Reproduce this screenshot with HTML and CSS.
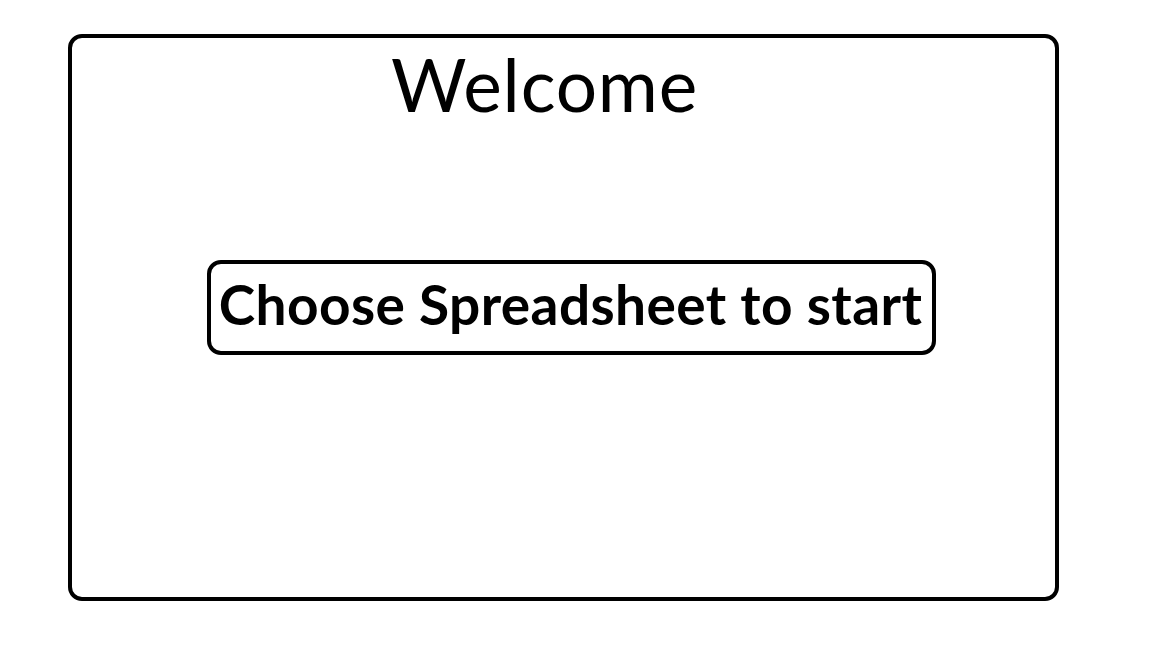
FILE: index.html
```html
<!DOCTYPE html>
<html lang="en">
<head>
<meta charset="utf-8">
<title>Welcome</title>
<link rel="stylesheet" href="styles.css">
</head>
<body>
<main class="card">
  <h1 class="title">Welcome</h1>
  <button class="start-btn" type="button">Choose Spreadsheet to start</button>
</main>
</body>
</html>
```
FILE: styles.css
```css
html, body {
  margin: 0;
  padding: 0;
  background: #ffffff;
}

body {
  font-family: "Lato", "Open Sans", sans-serif;
  color: #000000;
  padding: 34px 0 0 68px;
  width: 1152px;
  height: 648px;
  box-sizing: border-box;
  overflow: hidden;
}

.card {
  box-sizing: border-box;
  width: 991px;
  height: 567px;
  border: 4px solid #000000;
  border-radius: 14px;
  display: flex;
  flex-direction: column;
  align-items: flex-start;
}

.title {
  margin: 10px 0 0 319px;
  font-size: 73px;
  font-weight: 400;
  letter-spacing: 0.8px;
  line-height: 1;
}

.start-btn {
  box-sizing: border-box;
  margin: 139px 0 0 135px;
  width: 729px;
  height: 95px;
  border: 4px solid #000000;
  border-radius: 14px;
  background: #ffffff;
  color: #000000;
  font-family: "Lato", "Open Sans", sans-serif;
  font-size: 55px;
  font-weight: 700;
  letter-spacing: 0.4px;
  line-height: 1;
  padding: 0 2px 6px 0;
  cursor: pointer;
}
```
